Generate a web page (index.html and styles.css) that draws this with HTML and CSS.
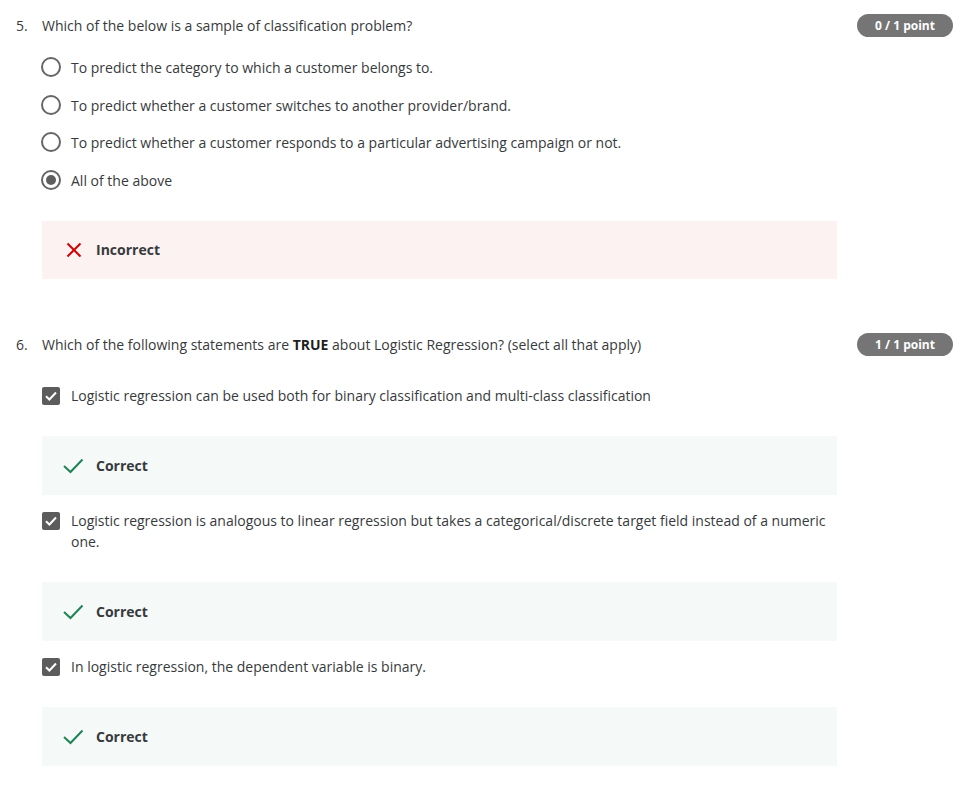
FILE: index.html
```html
<!DOCTYPE html>
<html lang="en">
<head>
<meta charset="utf-8">
<title>Quiz results</title>
<link rel="stylesheet" href="styles.css">
</head>
<body>
<div class="page">
  <section class="question q5">
    <div class="q-head">
      <span class="q-num">5.</span>
      <span class="q-text">Which of the below is a sample of classification problem?</span>
      <span class="pill">0 / 1 point</span>
    </div>
    <div class="options radios">
      <div class="opt"><span class="radio"></span><span class="opt-text">To predict the category to which a customer belongs to.</span></div>
      <div class="opt"><span class="radio"></span><span class="opt-text">To predict whether a customer switches to another provider/brand.</span></div>
      <div class="opt"><span class="radio"></span><span class="opt-text">To predict whether a customer responds to a particular advertising campaign or not.</span></div>
      <div class="opt"><span class="radio checked"></span><span class="opt-text">All of the above</span></div>
    </div>
    <div class="feedback incorrect">
      <svg class="fb-icon" width="16" height="16" viewBox="0 0 16 16"><path d="M1.5 1.5 L14.5 14.5 M14.5 1.5 L1.5 14.5" stroke="#d30000" stroke-width="2" fill="none"/></svg>
      <span class="fb-text">Incorrect</span>
    </div>
  </section>

  <section class="question q6">
    <div class="q-head">
      <span class="q-num">6.</span>
      <span class="q-text">Which of the following statements are <b>TRUE</b> about Logistic Regression? (select all that apply)</span>
      <span class="pill">1 / 1 point</span>
    </div>
    <div class="opt check-opt first">
      <span class="checkbox"><svg width="18" height="18" viewBox="0 0 18 18"><path d="M4 9.2 L7.4 12.5 L14 5.5" stroke="#fff" stroke-width="2" fill="none"/></svg></span>
      <span class="opt-text">Logistic regression can be used both for binary classification and multi-class classification</span>
    </div>
    <div class="feedback correct">
      <svg class="fb-icon" width="21" height="16" viewBox="0 0 21 16"><path d="M1 8 L7.5 14 L19.5 1.5" stroke="#1f8354" stroke-width="2" fill="none"/></svg>
      <span class="fb-text">Correct</span>
    </div>
    <div class="opt check-opt">
      <span class="checkbox"><svg width="18" height="18" viewBox="0 0 18 18"><path d="M4 9.2 L7.4 12.5 L14 5.5" stroke="#fff" stroke-width="2" fill="none"/></svg></span>
      <span class="opt-text">Logistic regression is analogous to linear regression but takes a categorical/discrete target field instead of a numeric one.</span>
    </div>
    <div class="feedback correct">
      <svg class="fb-icon" width="21" height="16" viewBox="0 0 21 16"><path d="M1 8 L7.5 14 L19.5 1.5" stroke="#1f8354" stroke-width="2" fill="none"/></svg>
      <span class="fb-text">Correct</span>
    </div>
    <div class="opt check-opt">
      <span class="checkbox"><svg width="18" height="18" viewBox="0 0 18 18"><path d="M4 9.2 L7.4 12.5 L14 5.5" stroke="#fff" stroke-width="2" fill="none"/></svg></span>
      <span class="opt-text">In logistic regression, the dependent variable is binary.</span>
    </div>
    <div class="feedback correct">
      <svg class="fb-icon" width="21" height="16" viewBox="0 0 21 16"><path d="M1 8 L7.5 14 L19.5 1.5" stroke="#1f8354" stroke-width="2" fill="none"/></svg>
      <span class="fb-text">Correct</span>
    </div>
  </section>
</div>
</body>
</html>
```

FILE: styles.css
```css
* { box-sizing: border-box; }
html, body { margin: 0; padding: 0; background: #fff; }
body {
  font-family: "Open Sans", "Noto Sans", "Liberation Sans", sans-serif;
  font-size: 14px;
  line-height: 21px;
  color: #373a3c;
}
.page {
  padding: 14px 10px 0 16px;
}
.question { display: flex; flex-direction: column; }
.q6 { margin-top: 54px; }

.q-head {
  display: flex;
  align-items: center;
  height: 23px;
}
.q-num { width: 26px; flex: none; }
.q-text { flex: 1; }
.q-text b { font-weight: 700; color: #1f1f1f; }
.pill {
  flex: none;
  width: 96px;
  height: 23px;
  border-radius: 12px;
  background: #757575;
  color: #fff;
  font-size: 12px;
  font-weight: 700;
  line-height: 23px;
  text-align: center;
}

.options { margin-left: 26px; }
.radios {
  display: flex;
  flex-direction: column;
  gap: 16.67px;
  margin-top: 20px;
}
.opt {
  display: flex;
  align-items: flex-start;
  gap: 10px;
}
.radio {
  flex: none;
  width: 20px;
  height: 20px;
  margin-left: -1px;
  border: 2px solid #666;
  border-radius: 50%;
  position: relative;
}
.radio.checked::after {
  content: "";
  position: absolute;
  left: 3px; top: 3px;
  width: 10px; height: 10px;
  border-radius: 50%;
  background: #5f5f5f;
}
.opt-text { max-width: 766px; }

.check-opt {
  margin-left: 26px;
  margin-top: 15px;
  gap: 11px;
}
.check-opt.first { margin-top: 29px; }
.checkbox {
  flex: none;
  width: 18px;
  height: 18px;
  margin-top: 2px;
  border-radius: 2px;
  background: #5c5c5c;
  display: flex;
}

.feedback {
  margin-left: 26px;
  width: 795px;
  height: 58px;
  margin-top: 30px;
  display: flex;
  align-items: center;
  padding-left: 24px;
}
.feedback.incorrect { background: #fdf2f2; }
.feedback.correct { background: #f5f9f8; height: 58.5px; margin-top: 30.5px; }
.fb-icon { flex: none; }
.incorrect .fb-icon { margin-right: 14px; }
.correct .fb-icon { margin-left: -3px; margin-right: 12px; }
.fb-text { font-weight: 700; color: #373a3c; }
```
